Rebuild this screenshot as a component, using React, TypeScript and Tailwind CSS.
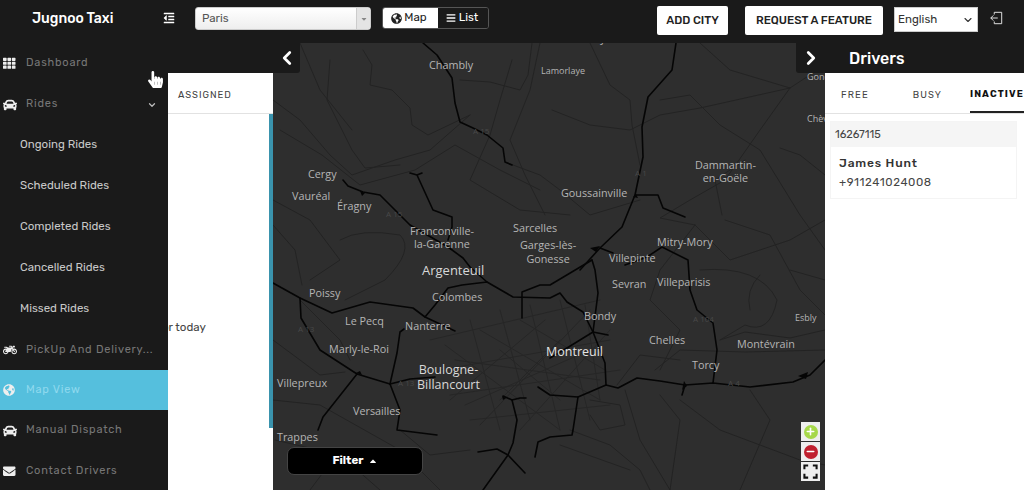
import React from 'react';
import { FaCar, FaEnvelope, FaGlobeAmericas, FaHandPointer, FaBars, FaMotorcycle, FaOutdent, FaTh, FaCaretUp, FaCaretDown } from 'react-icons/fa';
import { ChevronLeft, ChevronRight, ChevronDown, Plus, Minus } from 'lucide-react';

const navFont = "font-['Rubik','Roboto','Noto_Sans',sans-serif]";

const subItems = ['Ongoing Rides', 'Scheduled Rides', 'Completed Rides', 'Cancelled Rides', 'Missed Rides'];

// main roads, written in page coordinates (the svg viewBox starts at the map corner)
const motorways = [
  'M423 43 L437 55 L452 78 L455 103 L460 122 L473 128 L487 135 L503 148 L505 162 L512 165',
  'M343 180 L348 186 L363 192 L380 195 L410 225 L448 247 L463 258 L470 267 L487 282',
  'M410 173 L417 175 L422 173 M417 175 L433 210 L452 217 L452 227 L448 240',
  'M273 283 L300 298 L332 313 L370 302 L413 308 L425 317 L455 331',
  'M425 317 L435 305 L448 288 L462 285 L487 282 L513 297 L550 298 L560 293 L567 302 L583 312 L593 332',
  'M300 298 L301 318 L320 350 L357 374 L390 384',
  'M357 374 L323 417 L318 430',
  'M390 384 L400 410 L397 430 L437 435',
  'M390 384 L397 353 L400 332 L404 329',
  'M390 384 L410 379 L435 377',
  'M503 396 L512 400 L517 420 L513 443 L508 455 L483 490',
  'M478 452 L497 449 L508 455 L525 473',
  'M512 400 L520 398 L526 398',
  'M522 292 L522 318 M522 292 L540 285 L550 285 L592 260',
  'M535 457 L538 442 L550 437 L572 435 L573 430 L578 397 L606 385 L618 388 L637 378 L660 381 L685 385 L713 383 L750 387 L793 382 L810 375 L825 360',
  'M676 43 L672 70 L648 97 L642 127 L643 157 L635 195 L622 227 L600 248 L580 270',
  'M635 195 L658 195 L663 208 L685 217',
  'M600 248 L613 253',
  'M592 260 L595 270 L598 293 L593 332 L605 363 L606 385',
  'M593 332 L608 335 M593 332 L567 348 L550 358',
  'M625 265 L647 257 L662 247 L688 260 L690 290 L697 310 L713 323 L717 350 L713 383',
  'M685 385 L682 395',
  'M538 387 L550 395 L578 397',
];

// minor roads
const minorRoads = [
  'M363 50 L372 65 L370 85 L392 90 L410 108 L412 125 L428 135 L470 115',
  'M273 100 L300 120 L330 155 L352 175 L395 160 L430 150 L470 115',
  'M330 60 L327 100 L352 150 L365 168 L400 165',
  'M280 130 L322 155 L360 185 L415 170 L455 145 L500 170 L540 190',
  'M300 43 L320 90 L352 130',
  'M505 162 L540 175 L560 190 L590 215 L640 200',
  'M512 60 L500 100 L490 135 L470 180 L520 210 L570 215',
  'M540 43 L530 90 L510 140 L525 175 L545 215',
  'M460 80 L490 82 L520 90 L528 75 L532 43',
  'M552 110 L590 125 L630 130 L660 115 L700 108 L790 88',
  'M590 43 L610 85 L630 100 L632 125 L640 165',
  'M660 100 L690 95 L720 125 L760 150 L800 215 L825 250',
  'M700 43 L730 70 L790 88 L825 65',
  'M790 88 L760 130 L725 180 L690 200 L660 218 L695 225',
  'M695 225 L730 260 L790 240 L825 220',
  'M695 225 L660 270 L650 300 L680 330 L660 370',
  'M725 220 L770 235 L800 290 L825 315',
  'M745 160 L715 180 L722 215',
  'M780 148 L800 155 L825 175',
  'M273 200 L310 220 L340 260 L310 280',
  'M340 240 Q360 228 400 235 Q415 250 385 280 L345 300',
  'M273 225 L295 250 L302 285',
  'M300 300 L340 340 L350 360',
  'M273 340 L300 360 L320 375 L345 372',
  'M273 400 L320 405 L400 450 L440 490',
  'M275 440 L340 455 L380 490',
  'M400 430 L430 455 L470 450',
  'M340 450 L310 490',
  'M570 430 L610 445 L640 470 L650 490',
  'M590 400 L620 405 L625 425 L600 430 L590 415',
  'M625 390 L640 440 L670 490',
  'M660 395 L680 420 L670 490',
  'M680 400 L720 430 L800 460 L825 465',
  'M750 390 L770 420 L740 490',
  'M700 270 Q760 265 777 300 Q770 335 745 325 L720 340',
  'M760 275 Q745 290 750 310',
  'M720 340 L745 332 L790 338 L825 330',
  'M655 370 L680 350 L745 352 L825 350',
  'M790 270 L825 280',
  'M630 470 L560 445',
  'M617 385 L640 355 L680 360',
];

// dense web of streets around the centre of Paris
const parisRoads = [
  'M430 340 L600 300 M440 370 L610 340 M450 395 L620 370 M470 420 L610 405',
  'M470 320 L500 430 M500 310 L530 420 M530 305 L560 430 M560 300 L590 420 M585 305 L600 400',
  'M445 345 L560 430 M480 330 L600 400 M520 320 L605 370 M450 400 L545 320 M480 425 L590 310 M520 430 L610 330',
  'M455 360 L600 380 M465 405 L590 350 M500 350 L560 400 M500 400 L560 340',
];

const cities = [
  { name: 'Chantilly', cls: 'left-[289px] top-[-13px] text-[10.8px]' },
  { name: 'Chambly', cls: 'left-[156px] top-[14px] text-[10.8px]' },
  { name: 'Lamorlaye', cls: 'left-[268px] top-[21px] text-[9px]' },
  { name: 'Gonesse', cls: 'left-[534px] top-[27px] text-[9px]' },
  { name: 'Chèvreville', cls: 'left-[534px] top-[69px] text-[9px]' },
  { name: 'Dammartin-\nen-Goële', cls: 'left-[422px] top-[115px] text-[10.8px] leading-[13px] text-center' },
  { name: 'Cergy', cls: 'left-[35px] top-[123px] text-[10.8px]' },
  { name: 'Vauréal', cls: 'left-[19px] top-[145px] text-[10.8px]' },
  { name: 'Éragny', cls: 'left-[64px] top-[155px] text-[10.8px]' },
  { name: 'Goussainville', cls: 'left-[288px] top-[142px] text-[10.8px]' },
  { name: 'Franconville-\nla-Garenne', cls: 'left-[137px] top-[181px] text-[10.8px] leading-[13px] text-center' },
  { name: 'Sarcelles', cls: 'left-[240px] top-[177px] text-[10.8px]' },
  { name: 'Garges-lès-\nGonesse', cls: 'left-[247px] top-[195px] text-[10.8px] leading-[14px] text-center' },
  { name: 'Mitry-Mory', cls: 'left-[384px] top-[191px] text-[10.8px]' },
  { name: 'Villepinte', cls: 'left-[336px] top-[207px] text-[10.8px]' },
  { name: 'Argenteuil', cls: 'left-[149px] top-[218px] text-[13px] text-[#d8d8d8]' },
  { name: 'Sevran', cls: 'left-[339px] top-[233px] text-[10.8px]' },
  { name: 'Villeparisis', cls: 'left-[384px] top-[231px] text-[10.8px]' },
  { name: 'Poissy', cls: 'left-[36px] top-[242px] text-[10.8px]' },
  { name: 'Colombes', cls: 'left-[159px] top-[246px] text-[10.8px]' },
  { name: 'Bondy', cls: 'left-[311px] top-[265px] text-[10.8px]' },
  { name: 'Le Pecq', cls: 'left-[72px] top-[270px] text-[10.8px]' },
  { name: 'Nanterre', cls: 'left-[132px] top-[275px] text-[10.8px]' },
  { name: 'Chelles', cls: 'left-[376px] top-[289px] text-[10.8px]' },
  { name: 'Esbly', cls: 'left-[522px] top-[268px] text-[9px]' },
  { name: 'Marly-le-Roi', cls: 'left-[56px] top-[298px] text-[10.8px]' },
  { name: 'Montévrain', cls: 'left-[464px] top-[293px] text-[10.8px]' },
  { name: 'Montreuil', cls: 'left-[273px] top-[300px] text-[12.5px] text-[#e4e4e4]' },
  { name: 'Boulogne-\nBillancourt', cls: 'left-[144px] top-[319px] text-[12.5px] leading-[15px] text-center text-[#d8d8d8]' },
  { name: 'Torcy', cls: 'left-[419px] top-[314px] text-[10.8px]' },
  { name: 'Villepreux', cls: 'left-[4px] top-[332px] text-[10.8px]' },
  { name: 'Versailles', cls: 'left-[80px] top-[360px] text-[10.8px]' },
  { name: 'Trappes', cls: 'left-[4px] top-[386px] text-[10.8px]' },
];

const roadTags = [
  { name: 'A 15', cls: 'left-[200px] top-[82px]' },
  { name: 'A 15', cls: 'left-[113px] top-[165px]' },
  { name: 'A 1', cls: 'left-[362px] top-[124px]' },
  { name: 'A 13', cls: 'left-[25px] top-[280px]' },
  { name: 'A 13', cls: 'left-[125px] top-[334px]' },
  { name: 'A 104', cls: 'left-[420px] top-[270px]' },
  { name: 'A 4', cls: 'left-[455px] top-[334px]' },
];

function SideRow({ icon, label, active, short }: { icon: React.ReactNode; label: string; active?: boolean; short?: boolean }) {
  return (
    <div className={`flex items-center gap-[8px] pl-[3px] ${short ? 'h-[40px]' : 'h-[41px]'} ${active ? 'bg-[#55bfdd]' : ''}`}>
      <span className="flex w-[15px] shrink-0 justify-start text-[14px] text-[#eee]">{icon}</span>
      <span className={`truncate text-[11px] tracking-[0.07em] ${active ? 'text-[#8fd9ee]' : 'text-[#777]'}`}>{label}</span>
    </div>
  );
}

function MapView() {
  return (
    <div className="relative flex-1 overflow-hidden bg-[#2e2e2e] font-['Open_Sans','Noto_Sans',sans-serif] text-[#b5b5b5]">
      <svg viewBox="273 43 552 447" className="absolute inset-0 h-[447px] w-[552px]" fill="none" strokeLinejoin="round" strokeLinecap="round">
        {parisRoads.map((d, i) => <path key={i} d={d} stroke="#262626" strokeWidth="1" />)}
        {minorRoads.map((d, i) => <path key={i} d={d} stroke="#232323" strokeWidth="1" />)}
        {motorways.map((d, i) => <path key={i} d={d} stroke="#050505" strokeWidth="1.6" />)}
        <path d="M590 248 l6 4 l4 -6 z M360 191 l5 2 l-3 3 z M502 396 l4 2 l-3 2 z M356 373 l4 -2 l2 4 z M636 194 l-3 3 l5 1 z M684 381 l3 5 l-5 4 z M808 372 l-10 4 l8 3 z" fill="#050505" />
      </svg>

      {roadTags.map((t) => (
        <span key={t.cls} className={`absolute text-[8px] text-[#484848] ${t.cls}`}>{t.name}</span>
      ))}
      {cities.map((c) => (
        <span key={c.name} className={`absolute whitespace-pre ${c.cls}`}>{c.name}</span>
      ))}

      {/* collapse handles */}
      <button className="absolute left-0 top-0 flex h-[30px] w-[27px] items-center justify-center rounded-br-[3px] bg-[#1a1a1a] text-white">
        <ChevronLeft size={22} strokeWidth={3} />
      </button>
      <button className="absolute right-0 top-0 flex h-[30px] w-[29px] items-center justify-center rounded-bl-[3px] bg-[#1a1a1a] text-white">
        <ChevronRight size={22} strokeWidth={3} />
      </button>

      <button className={`absolute bottom-[15px] left-[14px] flex h-[28px] w-[136px] items-center justify-center gap-1 rounded-[7px] border border-[#444] bg-black text-[11.5px] font-bold text-white ${navFont}`}>
        Filter <FaCaretUp className="text-[10px]" />
      </button>

      {/* zoom controls */}
      <div className="absolute bottom-[9px] right-[5px] flex flex-col gap-[1px]">
        <div className="flex h-[19px] w-[19px] items-center justify-center bg-[#eeeeee]">
          <span className="flex h-[14px] w-[14px] items-center justify-center rounded-full bg-[#a6d84a] text-white"><Plus size={11} strokeWidth={3.5} /></span>
        </div>
        <div className="flex h-[19px] w-[19px] items-center justify-center bg-[#eeeeee]">
          <span className="flex h-[14px] w-[14px] items-center justify-center rounded-full bg-[#c0202f] text-white"><Minus size={11} strokeWidth={3.5} /></span>
        </div>
        <div className="flex h-[19px] w-[19px] items-center justify-center bg-[#eeeeee]">
          <svg viewBox="0 0 16 16" className="h-[15px] w-[15px]" fill="none" stroke="#111" strokeWidth="2.2">
            <path d="M1.5 5.5V1.5H5.5M10.5 1.5h4V5.5M14.5 10.5v4H10.5M5.5 14.5H1.5V10.5" />
          </svg>
        </div>
      </div>
    </div>
  );
}

export default function App() {
  return (
    <div className={`relative flex h-[490px] w-[1024px] flex-col overflow-hidden bg-white ${navFont}`}>
      {/* top bar */}
      <header className="flex h-[43px] shrink-0 items-start bg-[#1a1a1a] pt-[6px]">
        <div className="flex h-[24px] w-[163px] items-center pl-[32px] text-[14px] font-medium text-white">Jugnoo Taxi</div>
        <FaOutdent className="mt-[6px] text-[12px] text-white" />
        <div className="ml-[20px] mt-[1px] flex h-[23px] w-[176px] items-center rounded-[3px] border border-[#ccc] bg-gradient-to-b from-white to-[#eeeeee]">
          <span className="flex-1 pl-[6px] text-[11.5px] text-[#555]">Paris</span>
          <span className="flex h-full w-[14px] items-center justify-center border-l border-[#ccc] bg-[#e4e4e4]">
            <FaCaretDown className="text-[8px] text-[#888]" />
          </span>
        </div>
        <div className="ml-[11px] mt-[1px] flex h-[22px] w-[107px] overflow-hidden rounded-[3px] border border-[#555] text-[11.5px]">
          <span className="flex w-[55px] items-center justify-center gap-[2px] bg-white pr-[3px] text-[#222]"><FaGlobeAmericas className="text-[11px]" />Map</span>
          <span className="flex flex-1 items-center justify-center gap-[3px] bg-[#1a1a1a] pr-[2px] text-white"><FaBars className="text-[10px]" />List</span>
        </div>
        <button className="ml-[168px] flex h-[29px] w-[71px] items-center justify-center rounded-[2px] bg-white text-[11.5px] font-medium text-[#222]">ADD CITY</button>
        <button className="ml-[17px] flex h-[29px] w-[138px] items-center justify-center rounded-[2px] bg-white text-[11.5px] font-medium text-[#222]">REQUEST A FEATURE</button>
        <div className="ml-[11px] mt-[1px] flex h-[25px] w-[84px] items-center justify-between border border-[#ccc] bg-white px-[3px] text-[11.5px] text-[#333]">
          English <ChevronDown size={12} strokeWidth={2.2} />
        </div>
        <svg viewBox="0 0 16 16" className="ml-[11px] mt-[5px] h-[14px] w-[14px]" fill="none" stroke="#e6e6e6" strokeWidth="1.1">
          <path d="M6 4V1.5H14.5V14.5H6V12M10 8H2M2 8l3 -3M2 8l3 3" />
        </svg>
      </header>

      <div className="flex min-h-0 flex-1">
        {/* sidebar */}
        <aside className="w-[168px] shrink-0 bg-[#1a1a1a]">
          <SideRow icon={<FaTh className="text-[12.5px]" />} label="Dashboard" />
          <div className="relative">
            <SideRow icon={<FaCar />} label="Rides" />
            <ChevronDown size={10} strokeWidth={3} className="absolute right-[11px] top-[16px] text-[#bbb]" />
          </div>
          {subItems.map((s) => (
            <div key={s} className="flex h-[41px] items-center pb-[2px] pl-[20px] text-[11.5px] text-[#c8c8c8]">{s}</div>
          ))}
          <SideRow short icon={<FaMotorcycle />} label="PickUp And Delivery..." />
          <SideRow short active icon={<FaGlobeAmericas className="text-[12px]" />} label="Map View" />
          <SideRow icon={<FaCar />} label="Manual Dispatch" />
          <SideRow icon={<FaEnvelope className="text-[12.5px]" />} label="Contact Drivers" />
        </aside>

        {/* rides panel */}
        <section className="flex w-[105px] shrink-0 flex-col">
          <div className="h-[30px] bg-[#1a1a1a]" />
          <div className="flex h-[41px] items-center border-b border-[#e2e2e2] pl-[10px] pt-[5px] text-[9.5px] tracking-[0.1em] text-[#444]">ASSIGNED</div>
          <div className="relative flex-1 overflow-hidden bg-white">
            <div className="absolute right-0 top-0 h-[314px] w-[4px] bg-[#3a93ad]" />
            <p className="absolute left-[-6px] top-[205px] whitespace-nowrap text-[11.5px] text-[#444]">or today</p>
          </div>
        </section>

        <MapView />

        {/* drivers panel */}
        <section className="flex w-[199px] shrink-0 flex-col">
          <div className="flex h-[30px] items-center bg-[#1a1a1a] pl-[24px] pt-[2px] text-[16px] font-medium text-white">Drivers</div>
          <div className="flex h-[41px] border-b border-[#e2e2e2] text-[9.5px] tracking-[0.12em] text-[#444]">
            <div className="flex w-[60px] items-center justify-center pt-[4px]">FREE</div>
            <div className="flex w-[85px] items-center justify-center pt-[4px]">BUSY</div>
            <div className="flex flex-1 items-center justify-center whitespace-nowrap border-b-[2px] border-[#222] pt-[4px] font-bold text-[#111]">INACTIVE</div>
          </div>
          <div className="ml-[5px] mr-[7px] mt-[7px] border border-[#f4f4f4]">
            <div className="flex h-[25px] items-center bg-[#f5f5f5] px-[4px] pt-[1px] text-[11px] text-[#444]">16267115</div>
            <div className="px-[8px] pb-[7px] pt-[7px]">
              <div className="text-[12px] font-medium tracking-[0.07em] text-[#333]">James Hunt</div>
              <div className="mt-[2px] text-[11.5px] tracking-[0.05em] text-[#444]">+911241024008</div>
            </div>
          </div>
        </section>
      </div>

      <FaHandPointer className="absolute left-[147px] top-[71px] text-[17px] text-white" />
    </div>
  );
}
